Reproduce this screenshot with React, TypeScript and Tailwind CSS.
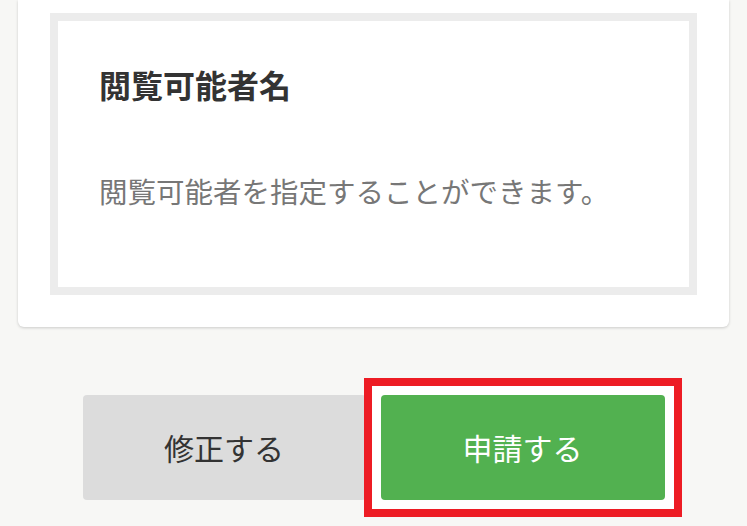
export default function App() {
  return (
    <div className="min-h-[526px] bg-[#f7f7f5] font-['Noto_Sans_CJK_JP','Noto_Sans',sans-serif]">
      <div className="mx-[18px] rounded-b-[6px] bg-white px-8 pb-8 pt-[13px] shadow-[0_1px_3px_rgba(0,0,0,0.18)]">
        <div className="border-8 border-[#ececec] pb-[76px] pl-[41px] pt-[43px]">
          <h2 className="text-[32px] font-bold leading-[40px] text-[#333]">閲覧可能者名</h2>
          <p className="mt-[67px] text-[28.5px] leading-[40px] text-[#777]">
            閲覧可能者を指定することができます。
          </p>
        </div>
      </div>

      <div className="mt-[68px] flex justify-center gap-[15px]">
        <button className="h-[105px] w-[283px] rounded-[4px] bg-[#dcdcdc] text-[30px] text-[#333]">
          修正する
        </button>
        <div className="relative">
          <span className="absolute -inset-[17px] border-8 border-[#ed1c24] bg-white" />
          <button className="relative h-[105px] w-[284px] rounded-[4px] bg-[#52b150] text-[30px] text-white">
            申請する
          </button>
        </div>
      </div>
    </div>
  );
}
